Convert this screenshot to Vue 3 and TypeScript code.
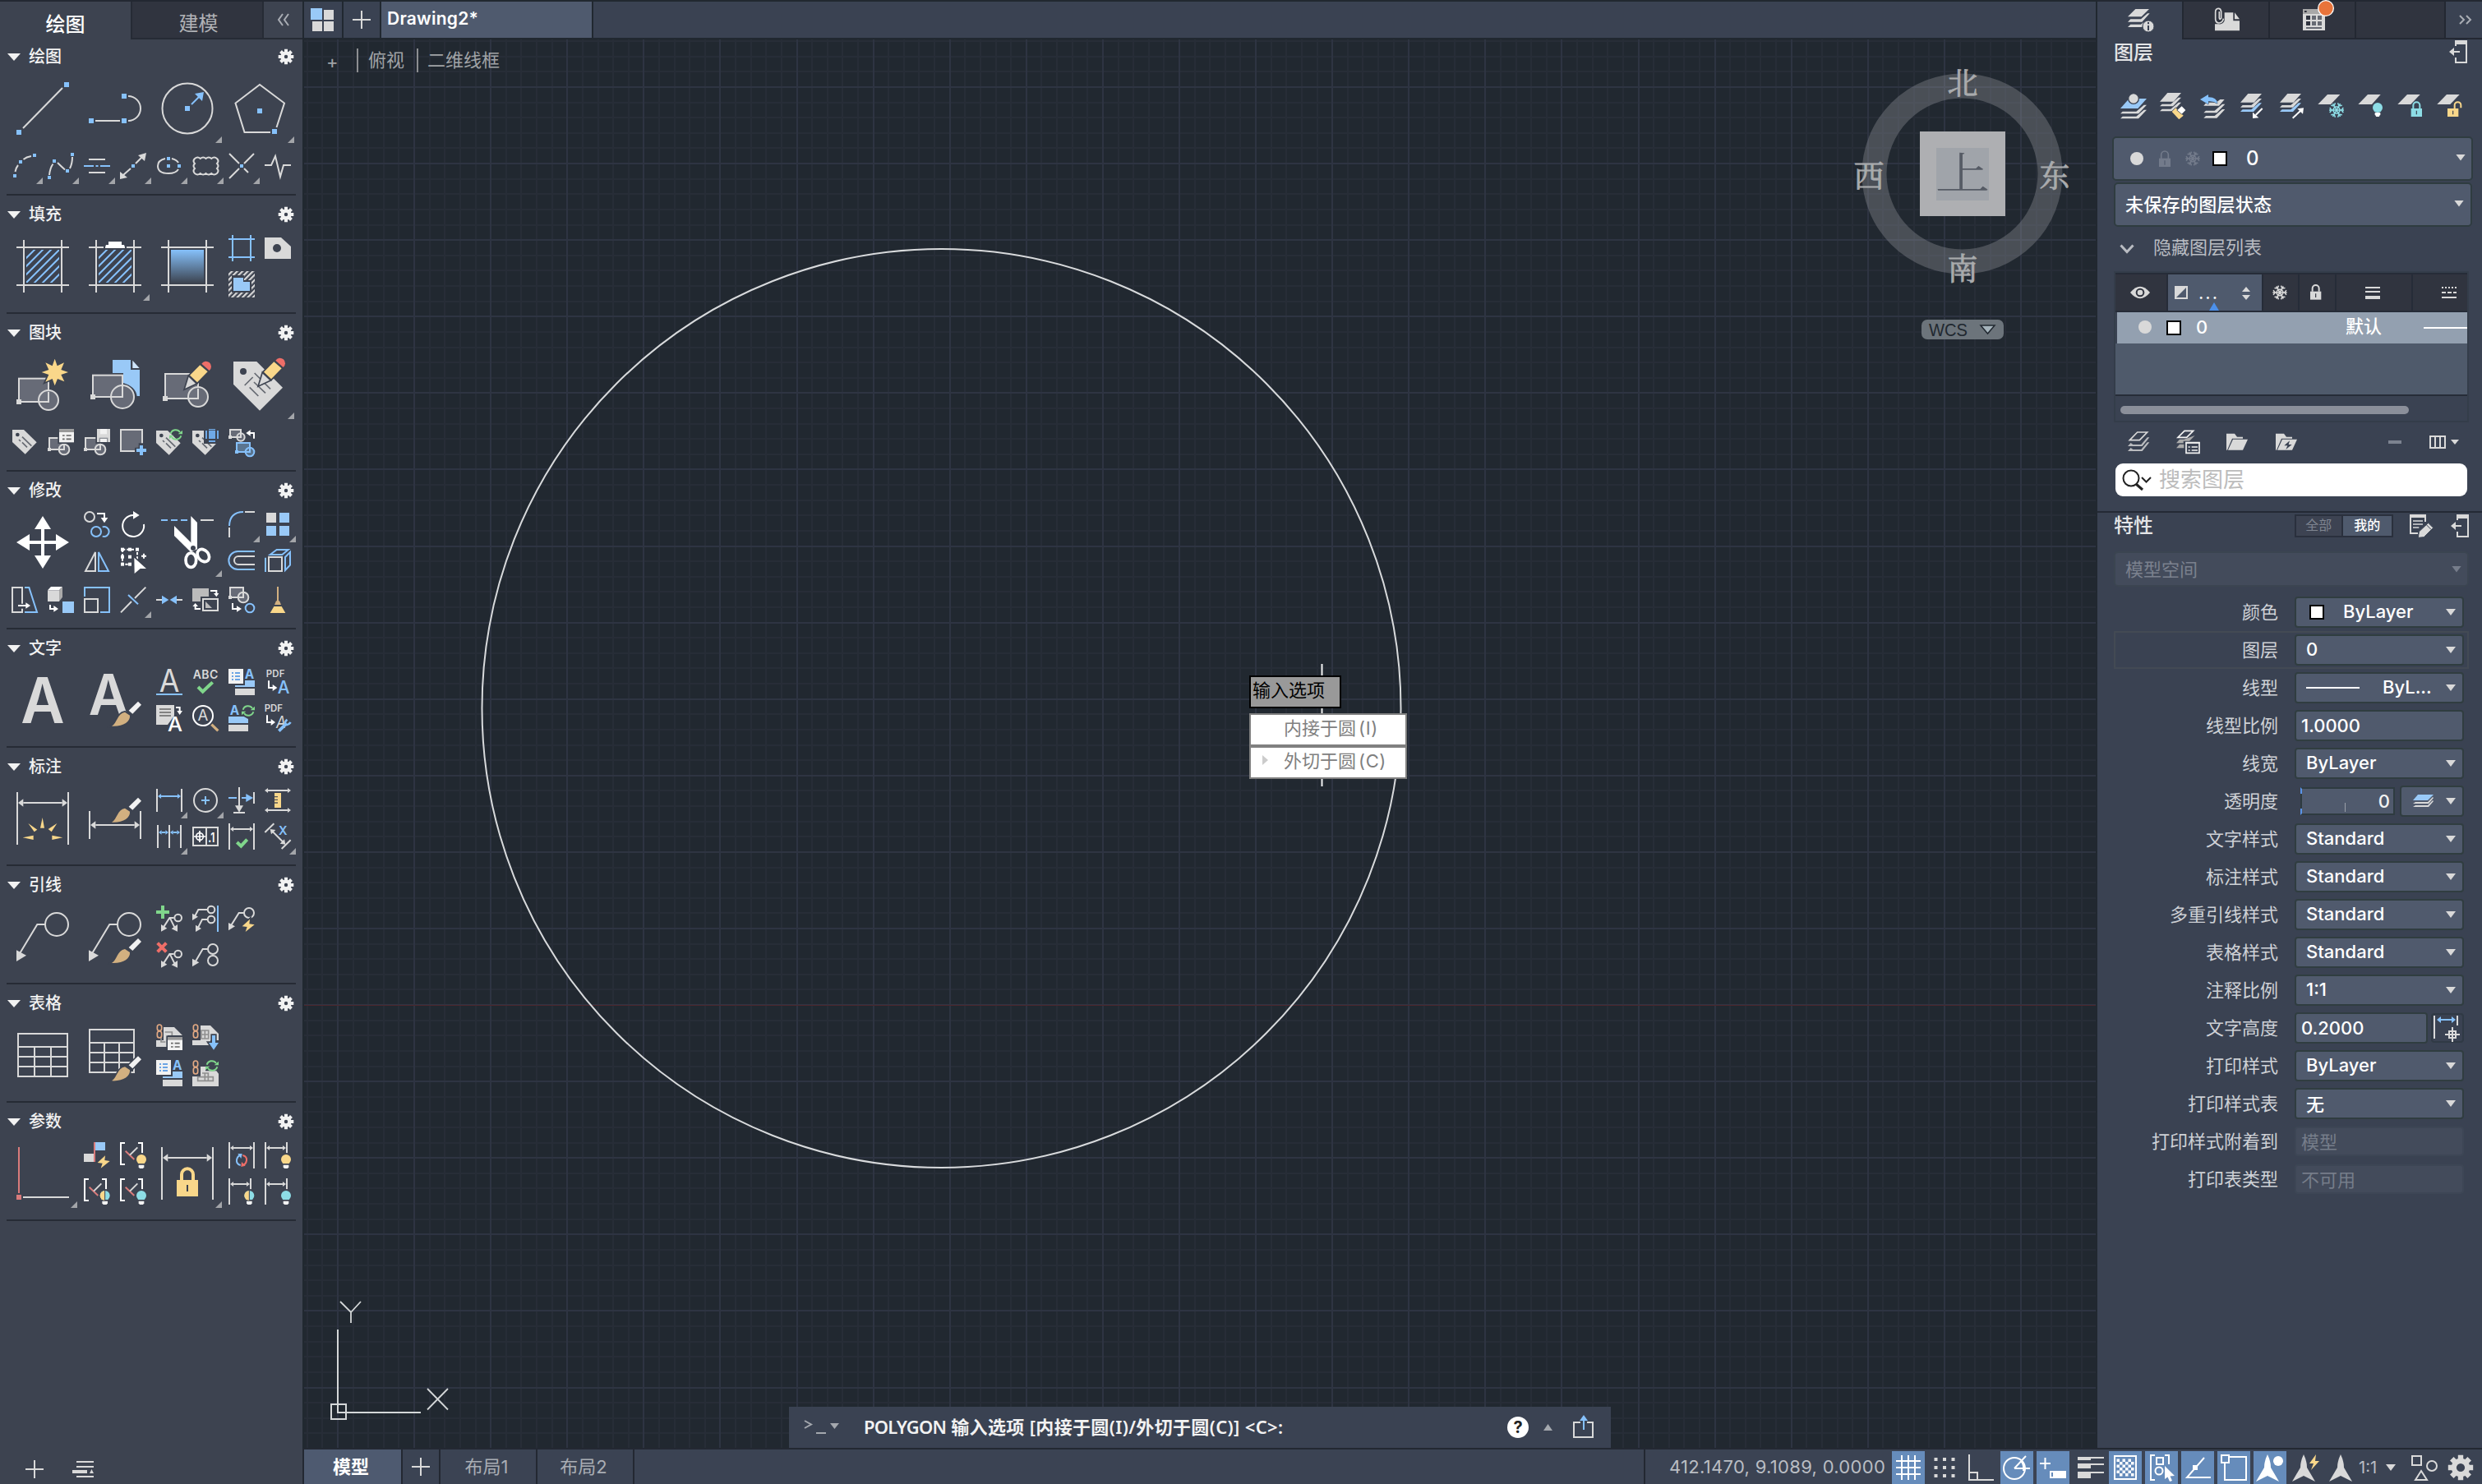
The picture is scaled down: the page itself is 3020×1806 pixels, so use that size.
<script setup lang="ts">
interface Glyph {
  c: number
  r: number
  big?: boolean
  fly?: boolean
  g: string
}
interface Section {
  title: string
  top: number
  baseY: number
  unit: number
  rows: number
  glyphs: Glyph[]
}

const PANEL = '#3d4350'

/* ---------- shared drawing helpers ---------- */
const sq = (x: number, y: number, s = 6, cls = 'fb2') =>
  `<rect class="${cls}" x="${x - s / 2}" y="${y - s / 2}" width="${s}" height="${s}"/>`

const dim = (x1: number, x2: number, y: number, s = 11, blue = false) => {
  const l = blue ? 'sb' : 'sg'
  const f = blue ? 'fb2' : 'fg'
  const k = s * 1.35
  return `<path class="${l}" d="M${x1 + k} ${y}H${x2 - k}"/><path class="${f}" d="M${x1} ${y}L${x1 + k} ${y - s}V${y + s}ZM${x2} ${y}L${x2 - k} ${y - s}V${y + s}Z"/>`
}

const brush = (x: number, y: number) =>
  `<g class="cut"><path class="fw" d="M${x + 60} ${y + 33}L${x + 94} ${y}L${x + 106} ${y + 12}L${x + 74} ${y + 45}Z"/>` +
  `<path class="ft" d="M${x - 2} ${y + 90}C${x + 18} ${y + 78} ${x + 18} ${y + 44} ${x + 46} ${y + 39}L${x + 64} ${y + 51}C${x + 66} ${y + 74} ${x + 40} ${y + 92} ${x - 2} ${y + 90}Z"/></g>`

const pencil = (x: number, y: number) =>
  `<g class="cut"><path class="fy" d="M${x + 17} ${y + 50}L${x + 54} ${y + 13}L${x + 82} ${y + 37}L${x + 44} ${y + 76}Z"/>` +
  `<path class="fg" d="M${x} ${y + 98}L${x + 13} ${y + 56}L${x + 38} ${y + 80}Z"/>` +
  `<path class="fr" d="M${x + 60} ${y + 8}A19 19 0 1 1 ${x + 88} ${y + 33}Z"/></g>`

const bulb = (x: number, y: number, col: string, half = false) =>
  `<g class="cut"><circle cx="${x}" cy="${y}" r="18" fill="${col}"/>` +
  `<path class="fw" d="M${x - 10} ${y + 20}H${x + 10}V${y + 28}L${x + 6} ${y + 33}H${x - 6}L${x - 10} ${y + 28}Z"/></g>` +
  (half ? `<path fill="#f9d78a" d="M${x} ${y - 18}A18 18 0 0 0 ${x} ${y + 18}Z"/><path stroke="${PANEL}" stroke-width="3" d="M${x} ${y - 18}V${y + 18}"/>` : '')

const blockShape = (x: number, y: number, w: number, h: number, r: number, cls = 'body', dot = 14) =>
  `<rect class="${cls}" x="${x}" y="${y}" width="${w}" height="${h}"/>` +
  `<circle class="${cls}" cx="${x + w}" cy="${y + h}" r="${r}"/>` +
  `<path class="${cls === 'body' ? 'sg' : 'sb'}" d="M${x + w} ${y + h - r}V${y + h}H${x + w - r}"/>` +
  sq(x, y + h, dot, cls === 'body' ? 'fg' : 'fb2')

const tag = (x: number, y: number) =>
  `<path class="fg" d="M${x} ${y}H${x + 42}L${x + 89} ${y + 46}L${x + 47} ${y + 89}L${x} ${y + 45}Z"/>` +
  `<circle cx="${x + 19}" cy="${y + 18}" r="7" fill="${PANEL}"/>` +
  `<path class="sd" d="M${x + 36} ${y + 26}l34 33M${x + 24} ${y + 36}l6 6M${x + 36} ${y + 46}l18 18"/>`

const sync = (x: number, y: number, r = 19) =>
  `<g class="cut"><path class="snn" d="M${x - r} ${y - 4}A${r} ${r} 0 0 1 ${x + r - 4} ${y - 9}M${x + r} ${y + 4}A${r} ${r} 0 0 1 ${x - r + 4} ${y + 9}"/></g>` +
  `<path class="fn" d="M${x + r + 5} ${y - 16}V${y - 2}H${x + r - 11}ZM${x - r - 5} ${y + 16}V${y + 2}H${x - r + 11}Z"/>`

const bolt = (x: number, y: number) =>
  `<path class="fy cut1" d="M${x + 28} ${y}L${x} ${y + 26}L${x + 18} ${y + 28}L${x + 12} ${y + 46}L${x + 45} ${y + 20}L${x + 26} ${y + 17}Z"/>`

const link = (x: number, y: number) =>
  `<rect class="so" x="${x + 4}" y="${y + 3}" width="16" height="22" rx="8"/><rect class="so" x="${x + 4}" y="${y + 27}" width="16" height="24" rx="8"/>`

const listA = (x: number, y: number, ax: number) =>
  `<text class="tx" x="${ax}" y="${y + 36}" font-size="46" font-weight="700" fill="#86c1fb">A</text>` +
  `<path fill="#99c9f7" d="M${x + 24} ${y + 60}H${x + 60}V${y + 42}H${x + 96}V${y + 66}H${x + 24}Z"/>` +
  `<path class="fg" d="M${x + 24} ${y + 72}H${x + 96}V${y + 96}H${x + 24}Z"/>` +
  `<path class="fw" d="M${x} ${y}H${x + 54}V${y + 54}H${x}Z"/>` +
  `<path stroke="#3f8ae0" stroke-width="5" d="M${x + 12} ${y + 15}h6m6 0h18M${x + 12} ${y + 27}h6m6 0h18M${x + 12} ${y + 39}h6m6 0h18"/>`

const card = (x: number, y: number) =>
  `<g class="cut"><rect class="fw" x="${x}" y="${y}" width="54" height="48"/></g><rect x="${x}" y="${y}" width="54" height="11" fill="#999"/>` +
  `<path stroke="#666" stroke-width="5" d="M${x + 12} ${y + 23}h8m6 0h18M${x + 12} ${y + 36}h8m6 0h18"/>`

const constraint = (x: number, y: number) =>
  `<path class="sw" d="M${x + 18} ${y + 3}H${x + 3}V${y + 81}H${x + 18}M${x + 66} ${y + 3}H${x + 81}V${y + 40}"/>` +
  `<path stroke="#d97b7b" stroke-width="6" d="M${x + 20} ${y + 32}l32 31"/><path class="sg" d="M${x + 36} ${y + 47}l28 -28"/>`

const leader = (x: number, y: number) =>
  `<path class="sg" d="M${x + 14} ${y + 148}L${x + 76} ${y + 45}H${x + 104}"/><circle class="sg" cx="${x + 147}" cy="${y + 45}" r="42"/>` +
  `<path class="fg" d="M${x} ${y + 180}V${y + 139}L${x + 36} ${y + 158}Z"/>`

const fanLeader = (x: number, y: number) =>
  `<path class="sg" d="M${x - 22} ${y + 34}L${x} ${y}H${x + 16}M${x + 2} ${y + 2}L${x + 18} ${y + 34}"/><circle class="sg" cx="${x + 31}" cy="${y}" r="13"/>` +
  `<path class="fg" d="M${x - 31} ${y + 50}V${y + 24}L${x - 9} ${y + 38}ZM${x + 29} ${y + 50}V${y + 24}L${x + 7} ${y + 40}Z"/>`

/* ---------- hatch frame used by the three fill tools ---------- */
const frame = (x: number) =>
  `<path class="sg" d="M${x + 9} 292V356M${x + 55} 292V356M${x} 301H${x + 64}M${x} 347H${x + 64}"/>`
const diag = (x: number) =>
  `<svg x="${x + 12}" y="304" width="40" height="40" viewBox="0 0 40 40"><path class="sb" d="M-2 12L12 -2M-2 22L22 -2M-2 32L32 -2M-2 42L42 -2M8 42L42 8M18 42L42 18M28 42L42 28"/></svg>`

/* ---------- scalloped outline of the revision cloud ---------- */
const cloud = () => {
  let d = 'M237 193'
  for (let i = 0; i < 4; i++) d += 'q3.500 -3 6.750 0'
  for (let i = 0; i < 3; i++) d += 'q3 3 0 6'
  for (let i = 0; i < 4; i++) d += 'q-3.500 3 -6.750 0'
  for (let i = 0; i < 3; i++) d += 'q-3 -3 0 -6'
  return d + 'Z'
}

const sections: Section[] = [
  {
    title: '绘图', top: 45, baseY: 0, unit: 1, rows: 3,
    glyphs: [
      { c: 0, r: 0, big: true, g: `<path class="sg" d="M28 156L76 107"/>${sq(23, 161)}${sq(81, 103)}` },
      { c: 2, r: 0, big: true, g: `<path class="sg" d="M116 147H146M156 117A15 15 0 0 1 156 147"/>${sq(111, 147)}${sq(151, 147)}${sq(151, 117)}` },
      { c: 4, r: 0, big: true, fly: true, g: `<circle class="sg" cx="228" cy="132" r="30.5"/>${sq(228, 132)}<path class="sb" d="M233 127L243 117"/><path class="fb2" d="M248 112L246 123L237 114Z"/>` },
      { c: 6, r: 0, big: true, fly: true, g: `<path class="sg" d="M329 161H297.5L286.5 125.5L316 103L346 125.5L336.500 155"/>${sq(316, 135)}${sq(334, 160)}` },
      { c: 0, r: 2, fly: true, g: `<path class="sg" d="M18.500 209Q19.500 204 22 201M28.500 194Q32 191 38 190"/>${sq(18, 214, 4)}${sq(25, 197, 4)}${sq(42, 189, 4)}` },
      { c: 1, r: 2, fly: true, g: `<path class="sg" d="M60 213Q61 204 64.500 199.500M70 198Q74 202 79 206.500M85 205Q88 199 88 191"/>${sq(60, 216, 4)}${sq(66, 196, 4)}${sq(82, 208, 4)}${sq(88, 188, 4)}` },
      { c: 2, r: 2, fly: true, g: `<path class="sg" d="M108 194H128M108 210H128"/><path class="sb" d="M102 202H114M116.500 202H119.500M122 202H134"/>` },
      { c: 3, r: 2, fly: true, g: `<path class="sg" d="M150 213L159 205M165 199L173 191"/><path class="fg" d="M146 218V209L155 216ZM178 186L176 196L168 189Z"/>${sq(162, 202, 4)}` },
      { c: 4, r: 2, fly: true, g: `<path class="sg" d="M201 193Q192 195 192 202Q192 211 205 211Q214 211 217 206M209 193Q215 194.500 217 198"/>${sq(205, 193, 4)}${sq(218, 202, 4)}${sq(205, 202, 4)}` },
      { c: 5, r: 2, fly: true, g: `<path class="sg" d="${cloud()}"/>` },
      { c: 6, r: 2, fly: true, g: `<path class="sg" d="M279 187L291 199M309 187L297 199M279 217L291 205M297 205L302 210"/>${sq(294, 202, 4)}` },
      { c: 7, r: 2, g: `<path class="sg" d="M322 201H330L335 190L341 215L345 201H354"/>` },
    ],
  },
  {
    title: '填充', top: 237, baseY: 0, unit: 1, rows: 2,
    glyphs: [
      { c: 0, r: 0, big: true, g: frame(20) + diag(20) },
      { c: 2, r: 0, big: true, fly: true, g: frame(108) + diag(108) + `<path fill="${PANEL}" d="M126 292H154V303H126Z"/><path fill="#fff" d="M132 294H148V298H151Q152 300 152 302H128Q128 300 129 298H132Z"/>` },
      { c: 4, r: 0, big: true, g: `<defs><linearGradient id="fillGrad" x1="0" y1="0" x2="0" y2="1"><stop offset="0" stop-color="#86c1fb"/><stop offset="1" stop-color="#3d4552"/></linearGradient></defs>${frame(196)}<rect x="208" y="304" width="40" height="40" fill="url(#fillGrad)"/>` },
      { c: 6, r: 0, g: `<path class="sb" d="M283 286V318M305 286V318M278 291H310M278 313H310"/>` },
      { c: 7, r: 0, g: `<path class="fg" d="M322 289H342L354 300V315H322Z"/><circle cx="337" cy="302" r="5" fill="${PANEL}"/>` },
      { c: 6, r: 1, g: `<defs><pattern id="edgeHatch" width="4.500" height="4.500" patternUnits="userSpaceOnUse" patternTransform="rotate(45)"><rect width="2.200" height="4.500" fill="#d9d9d9"/></pattern></defs><rect x="278" y="330" width="32" height="32" fill="url(#edgeHatch)"/><path fill="${PANEL}" d="M282 335H297V341H306V356H282Z"/><path fill="#99c9f7" d="M284 338H296V343H304V354H284Z"/>` },
    ],
  },
  {
    title: '图块', top: 381, baseY: 390, unit: 3, rows: 3,
    glyphs: [
      { c: 0, r: 0, big: true, g: blockShape(69, 212, 108, 85, 36, 'body', 18).replace('cy="297"', 'cy="291"') + `<path class="fy cut1" d="M200 140L209 166L234 154L223 180L249 189L223 198L235 223L210 213L200 238L191 213L166 224L178 198L152 189L178 180L166 154L191 166Z"/>` },
      { c: 2, r: 0, big: true, g: `<path fill="#99c9f7" d="M411 144H477V180H510V276H500Q494 240 450 228V192H411Z"/><path fill="#cfe5fa" d="M484 146L509 174H484Z"/><g>${blockShape(339, 200, 108, 79, 42, 'body', 18)}</g>` },
      { c: 4, r: 0, big: true, g: blockShape(603, 195, 120, 90, 36, 'body', 18).replace('cy="285"', 'cy="279"') + pencil(676, 150) },
      { c: 6, r: 0, big: true, fly: true, g: `<path class="fg" d="M852 150H937L1032 245L948 329L852 233Z"/><circle cx="888" cy="186" r="12" fill="${PANEL}"/><path class="sd" d="M893 237l30 -30M929 192l58 58M927 225l42 40M911 244l32 32"/>${pencil(946, 138)}` },
      { c: 0, r: 2, g: tag(45, 399) },
      { c: 1, r: 2, g: blockShape(180, 429, 54, 42, 19, 'body', 12) + card(216, 397) },
      { c: 2, r: 2, g: blockShape(312, 429, 54, 42, 19, 'body', 12) + `<g class="cut"><path class="fg" d="M354 396H402V444H354Z"/></g><path class="fw" d="M366 396H390V415H366Z"/><path fill="#8d9097" d="M362 428H394V444H362Z"/><path class="fw" d="M366 432H390V444H366Z"/>` },
      { c: 3, r: 2, g: `<rect class="body" x="441" y="399" width="78" height="78"/><path stroke="${PANEL}" stroke-width="20" d="M516 448V492M492 474H534"/><path stroke="#86c1fb" stroke-width="12" d="M516 456V492M498 474H534"/>` },
      { c: 4, r: 2, g: tag(570, 402) + sync(642, 417) },
      { c: 5, r: 2, g: tag(702, 402) + `<path fill="${PANEL}" d="M744 392H798V450H744Z"/><path fill="#6fa9e6" d="M762 402H786V432H762ZM762 396H786V400H762ZM762 438H786V444H762ZM750 402H756V432H750ZM792 402H798V432H792Z"/>` },
      { c: 6, r: 2, g: blockShape(840, 399, 39, 27, 14, 'body', 12) + `<path class="sw" d="M927 431V411H908"/><path fill="#fff" d="M898 411L914 400V422Z"/>` + blockShape(864, 447, 48, 33, 16, 'bodyb', 12) },
    ],
  },
  {
    title: '修改', top: 573, baseY: 390, unit: 3, rows: 3,
    glyphs: [
      { c: 0, r: 0, big: true, g: `<path stroke="#fff" stroke-width="12" d="M156 750V870M96 810H216"/><path fill="#fff" d="M156 714L186 762H126ZM156 906L186 858H126ZM60 810L108 780V840ZM252 810L204 780V840Z"/>` },
      { c: 2, r: 0, g: `<circle class="sg" cx="327" cy="717" r="18"/><path class="sw" d="M354 705H381V722"/><path fill="#fff" d="M368 720H394L381 739Z"/><circle class="sb" cx="351" cy="771" r="18"/><path class="sb" d="M374 754A18 18 0 1 1 374 788"/>` },
      { c: 3, r: 0, g: `<path class="sw" d="M525 744A39 39 0 1 1 486 711H492"/><path fill="#fff" d="M486 696L509 711L486 725Z"/>` },
      { c: 2, r: 1, g: `<path class="sg" d="M348 846V915H312Z"/><path class="sb" d="M360 846V915H396Z"/>` },
      { c: 3, r: 1, g: `<path class="sw" stroke-dasharray="10 6" d="M447 836H501V890M447 836V890H480"/>${[[447, 836], [474, 836], [501, 836], [447, 863], [447, 890], [474, 863], [474, 890]].map(p => sq(p[0], p[1], 12, 'fww')).join('')}<path fill="#fff" class="cut1" d="M490 866L534 906L512 906L491 924Z"/><path class="sw" d="M516 860H534M525 851V869"/>` },
      { c: 4, r: 0, big: true, fly: true, g: `<path class="sb" d="M588 729H612M624 729H648M660 729H684"/><path class="sg" d="M732 729H780"/><path fill="#fff" d="M697 714L720 738V835L697 845Z"/><path fill="#fff" d="M636 750L718 832L696 845L636 786Z"/><ellipse cx="697" cy="875" rx="19" ry="26" fill="none" stroke="#fff" stroke-width="11"/><ellipse cx="742" cy="858" rx="19" ry="25" transform="rotate(-40 742 858)" fill="none" stroke="#fff" stroke-width="11"/><circle cx="705" cy="831" r="9" fill="${PANEL}"/>` },
      { c: 6, r: 0, fly: true, g: `<path class="sb" d="M837 750Q838 700 888 699"/><path class="sg" d="M894 699H930M837 756V792"/>` },
      { c: 7, r: 0, fly: true, g: `<path class="fg" d="M972 702H1008V738H972Z"/><path fill="#99c9f7" d="M1020 702H1056V738H1020ZM972 750H1008V786H972ZM1020 750H1056V786H1020Z"/>` },
      { c: 6, r: 1, g: `<path class="sb" d="M930 843H868A33 33 0 0 0 868 909H930"/><path class="sg" d="M930 861H870A15 15 0 0 0 870 891H930"/>` },
      { c: 7, r: 1, g: `<rect class="sg" x="981" y="864" width="48" height="51"/><path class="sb" d="M969 866V918M986 855L1010 837H1052L1030 855ZM1041 864L1059 846V893L1041 912Z"/>` },
      { c: 0, r: 2, g: `<path class="sg" d="M81 1034V975H45V1065H81V1052"/><path class="sb" d="M90 975H106L135 1065H90"/><path class="sw" d="M66 1041H98"/><path fill="#fff" d="M94 1030L111 1041L94 1052Z"/>` },
      { c: 1, r: 2, g: `<path fill="#fff" d="M174 985L186 972H228L216 985Z"/><path fill="#d9d9d9" d="M174 985H216V1026H174Z"/><path fill="#aaa" d="M216 985L228 972V1010L216 1026Z"/><path fill="#99c9f7" d="M228 1026H270V1068H228Z"/><path class="sw" d="M183 1038V1053H198"/><path fill="#fff" d="M196 1041L213 1053L196 1064Z"/>` },
      { c: 2, r: 2, g: `<path class="sb" d="M309 1008V975H399V1065H366"/><rect class="sg" x="309" y="1017" width="48" height="48"/>` },
      { c: 3, r: 2, fly: true, g: `<path class="sg" d="M441 1066L480 1026M492 1014L532 974"/><path class="sb" d="M468 1002L504 1036"/>` },
      { c: 4, r: 2, g: `<path class="sg" d="M570 1020H594M642 1020H666"/><path class="fb2" d="M591 1004L616 1020L591 1036ZM645 1004L620 1020L645 1036Z"/>` },
      { c: 5, r: 2, g: `<path fill="#bbb" d="M702 978H762V1008H732V1026H702Z"/><rect class="sg" x="741" y="1017" width="54" height="42"/><path fill="#bbb" d="M750 1026L774 1050H750Z"/><path class="sw" d="M768 987H790V998M732 1053H713V1042"/><path fill="#fff" d="M780 996H799L790 1009ZM703 1044H723L713 1032Z"/>` },
      { c: 6, r: 2, g: blockShape(840, 975, 48, 36, 19, 'body', 12) + `<path class="sw" d="M849 1032V1053H868"/><path fill="#fff" d="M864 1042L882 1053L864 1064Z"/><circle class="sb" cx="912" cy="1050" r="16"/>` },
      { c: 7, r: 2, g: `<path stroke="#d2b080" stroke-width="6" d="M1014 972V1030"/><path class="ft" d="M1008 1024H1020L1026 1038H1002Z"/><path class="fy" d="M1000 1044H1028L1042 1068H986Z"/>` },
    ],
  },
  {
    title: '文字', top: 765, baseY: 765, unit: 3, rows: 2,
    glyphs: [
      { c: 0, r: 0, big: true, g: `<text class="tx" x="156" y="345" font-size="230" font-weight="600" text-anchor="middle" textLength="160" lengthAdjust="spacingAndGlyphs" fill="#d9d9d9">A</text>` },
      { c: 2, r: 0, big: true, g: `<text class="tx" x="396" y="315" font-size="206" font-weight="600" text-anchor="middle" textLength="146" lengthAdjust="spacingAndGlyphs" fill="#d9d9d9">A</text>${brush(410, 266)}` },
      { c: 4, r: 0, g: `<text class="tx" x="618" y="231" font-size="114" text-anchor="middle" textLength="74" lengthAdjust="spacingAndGlyphs" fill="#d9d9d9">A</text><path class="sb" d="M570 240H666"/>` },
      { c: 5, r: 0, g: `<text class="tx" x="750" y="183" font-size="42" font-weight="600" text-anchor="middle" textLength="92" fill="#d9d9d9">ABC</text><path stroke="#80d68b" stroke-width="12" fill="none" d="M723 213L740 230L776 196"/>` },
      { c: 6, r: 0, g: listA(834, 147, 893) },
      { c: 7, r: 0, g: `<text class="tx" x="971" y="177" font-size="34" font-weight="600" textLength="68" fill="#d9d9d9">PDF</text><path class="sw" d="M981 190V216H998"/><path fill="#fff" d="M995 204L1012 216L995 228Z"/><text class="tx" x="1035" y="237" font-size="64" font-weight="500" text-anchor="middle" textLength="44" lengthAdjust="spacingAndGlyphs" fill="#86c1fb">A</text>` },
      { c: 4, r: 1, g: `<path class="fg" d="M570 279H636V318L612 351H570Z"/><path stroke="#666" stroke-width="5" d="M582 294H624M582 306H624M582 318H624"/><path class="sw" d="M642 288H656V302"/><path fill="#fff" d="M646 300H666L656 315Z"/><text class="tx" x="639" y="375" font-size="74" font-weight="500" text-anchor="middle" textLength="54" lengthAdjust="spacingAndGlyphs" fill="#fff">A</text>` },
      { c: 5, r: 1, g: `<circle class="sw" cx="741" cy="318" r="36"/><text class="tx" x="741" y="336" font-size="56" text-anchor="middle" fill="#d9d9d9">A</text><path stroke="#d2b080" stroke-width="10" d="M772 350L796 373"/>` },
      { c: 6, r: 1, g: `<text class="tx" x="839" y="315" font-size="46" font-weight="700" fill="#86c1fb">A</text><path fill="#99c9f7" d="M834 321H890L906 330V345H834Z"/><path class="fg" d="M834 351H906V375H834Z"/>${sync(906, 300)}` },
      { c: 7, r: 1, g: `<text class="tx" x="965" y="303" font-size="34" font-weight="600" textLength="67" fill="#d9d9d9">PDF</text><path class="sw" d="M975 316V342H992"/><path fill="#fff" d="M989 330L1005 342L989 354Z"/><text class="tx" x="1026" y="363" font-size="62" font-style="italic" text-anchor="middle" textLength="36" lengthAdjust="spacingAndGlyphs" fill="#d9d9d9">A</text><path stroke="#86c1fb" stroke-width="11" d="M1018 374L1046 346"/><path stroke="#86c1fb" stroke-width="8" fill="none" d="M1048 332Q1036 344 1044 350Q1052 354 1061 342"/>` },
    ],
  },
  {
    title: '标注', top: 909, baseY: 765, unit: 3, rows: 2,
    glyphs: [
      { c: 0, r: 0, big: true, g: `<path class="sg" d="M63 597V789M249 597V789"/>${dim(66, 246, 636, 14)}<path class="fy" d="M155 690L162 728H147ZM103 711L136 734L125 742ZM208 711L176 732L188 742ZM83 763L122 755V771ZM229 763L190 755V771Z"/>` },
      { c: 2, r: 0, big: true, g: `<path class="sg" d="M327 666V768M513 666V768"/>${dim(330, 510, 717, 14)}${brush(410, 617)}` },
      { c: 4, r: 0, fly: true, g: `<path class="sg" d="M573 585V669M663 585V669"/>${dim(576, 660, 612, 9, true)}` },
      { c: 5, r: 0, fly: true, g: `<circle class="sg" cx="750" cy="627" r="42"/><path class="sb" d="M735 627H765M750 612V642"/>` },
      { c: 6, r: 0, g: `<path class="sb" d="M834 618H864M882 618H900"/><path class="fb2" d="M898 603L924 618L898 633Z"/><path class="sg" d="M927 597V639M873 579V650M852 672H894"/><path class="fg" d="M858 646H888L873 671Z"/>` },
      { c: 7, r: 0, g: `${dim(966, 1062, 591, 9)}${dim(966, 1062, 663, 9)}<path class="fy" d="M1002 600H1026V654H1002Z"/><path stroke="#555" stroke-width="4" d="M1002 614H1014M1002 625H1014M1002 636H1014"/>` },
      { c: 4, r: 1, fly: true, g: `<path class="sg" d="M576 717V801M618 717V801M660 717V801"/>${dim(579, 615, 744, 8, true)}${dim(621, 657, 744, 8, true)}` },
      { c: 5, r: 1, g: `<rect class="sg" x="705" y="726" width="90" height="66"/><path class="sg" d="M753 726V792"/><circle cx="729" cy="759" r="13" fill="none" stroke="#fff" stroke-width="5"/><path stroke="#fff" stroke-width="5" d="M708 759H750M729 738V780"/><text class="tx" x="772" y="780" font-size="48" font-weight="600" text-anchor="middle" textLength="24" lengthAdjust="spacingAndGlyphs" fill="#fff">.1</text>` },
      { c: 6, r: 1, g: `<path class="sg" d="M837 711V807M927 711V807"/>${dim(840, 924, 732, 9)}<path stroke="#80d68b" stroke-width="12" fill="none" d="M865 780L880 794L902 770"/>` },
      { c: 7, r: 1, fly: true, g: `<path class="sg" d="M967 744L1000 712M1028 804L1061 772M994 740L1034 780"/><path class="fg" d="M986 732L1006 735L990 751ZM1042 788L1022 785L1038 769Z"/><text class="tx" x="1033" y="752" font-size="44" font-weight="600" text-anchor="middle" fill="#86c1fb">X</text>` },
    ],
  },
  {
    title: '引线', top: 1053, baseY: 765, unit: 3, rows: 2,
    glyphs: [
      { c: 0, r: 0, big: true, g: leader(60, 1035) },
      { c: 2, r: 0, big: true, g: leader(324, 1035) + brush(410, 1131) },
      { c: 4, r: 0, g: `<path stroke="#80d68b" stroke-width="12" d="M594 1011V1059M570 1035H618"/>${fanLeader(619, 1056)}` },
      { c: 5, r: 0, g: `<path class="sg" d="M710 1052L724 1026H756M722 1094L738 1062H756"/><circle class="sg" cx="771" cy="1026" r="13"/><circle class="sg" cx="771" cy="1062" r="13"/><path class="fg" d="M702 1065V1040L723 1052ZM714 1107V1082L735 1095Z"/><path class="sb" d="M795 1011V1107"/>` },
      { c: 6, r: 0, g: `<path class="sg" d="M842 1086L872 1038H890"/><circle class="sg" cx="909" cy="1038" r="18"/><path class="fg" d="M834 1102V1074L858 1087Z"/>${bolt(884, 1061)}` },
      { c: 4, r: 1, g: `<path stroke="#ee6e68" stroke-width="12" d="M575 1148L607 1180M607 1148L575 1180"/>${fanLeader(619, 1188)}` },
      { c: 5, r: 1, g: `<path class="sg" d="M712 1218L740 1170H758"/><circle class="sg" cx="777" cy="1170" r="18"/><circle class="sg" cx="777" cy="1212" r="18"/><path class="fg" d="M702 1234V1205L727 1219Z"/>` },
    ],
  },
  {
    title: '表格', top: 1197, baseY: 1200, unit: 3, rows: 2,
    glyphs: [
      { c: 0, r: 0, big: true, g: `<path class="sg" d="M66 174H246V330H66ZM66 222H246M66 258H246M66 294H246M126 222V330M186 222V330"/>` },
      { c: 2, r: 0, big: true, g: `<path class="sg" d="M327 159H489V315H327ZM327 207H489M327 243H489M327 279H489M381 207V315M435 207V315"/>${brush(410, 256)}` },
      { c: 4, r: 0, g: `<path class="fg" d="M597 150H636L666 180H612V222H570V198H597Z"/><path stroke="#8f8f8f" stroke-width="5" fill="none" d="M602 168H628V180M588 186V204H604"/>${link(570, 138)}${card(612, 186)}` },
      { c: 5, r: 0, g: `<path class="fg" d="M732 144H768L798 174V198H768V216H702V198H732Z"/><path stroke="#8f8f8f" stroke-width="5" fill="none" d="M734 162H762M734 177H762M734 192H762M735 160V194M748 160V194M761 160V194"/>${link(702, 138)}<g class="cut"><path class="fb2" d="M774 180H786V207H798L780 233L762 207H774Z"/></g>` },
      { c: 4, r: 1, g: listA(570, 270, 630) },
      { c: 5, r: 1, g: `<path class="fg" d="M732 294H750V310H790L798 320V366H702V330H732Z"/><path stroke="#8f8f8f" stroke-width="5" fill="none" d="M722 332H778V346H722ZM738 318H760V346M748 318V346"/>${link(702, 270)}${sync(774, 291)}` },
    ],
  },
  {
    title: '参数', top: 1341, baseY: 1200, unit: 3, rows: 2,
    glyphs: [
      { c: 0, r: 0, big: true, fly: true, g: `<path stroke="#d97b7b" stroke-width="6" d="M69 588V756"/>${sq(69, 771, 18, 'fp')}<path class="sg" d="M84 771H252"/>` },
      { c: 2, r: 0, g: `<path fill="#99c9f7" d="M348 570H384V600H348Z"/><path class="fg" d="M306 612H342V642H306Z"/><path stroke="#d97b7b" stroke-width="6" d="M345 570V642"/>${bolt(356, 619)}` },
      { c: 3, r: 0, g: constraint(438, 570) + bulb(516, 633, '#f9d78a') },
      { c: 2, r: 1, g: constraint(306, 702) + bulb(383, 765, '#8ddde6', true) },
      { c: 3, r: 1, g: constraint(438, 702) + bulb(516, 765, '#8ddde6') },
      { c: 4, r: 0, big: true, fly: true, g: `<path class="sg" d="M591 588V780M777 588V780"/>${dim(594, 774, 627, 14)}<path class="fy" d="M645 708H723V768H645Z"/><path fill="none" stroke="#f9d78a" stroke-width="12" d="M663 708V688A21 21 0 0 1 705 688V708"/><path stroke="${PANEL}" stroke-width="6" d="M684 726V750"/>` },
      { c: 6, r: 0, g: `<path class="sg" d="M837 570V666M927 570V666"/>${dim(840, 924, 591, 9)}<path class="sb" d="M878 654Q862 650 864 635Q866 622 876 618"/><path class="fb2" d="M868 612L884 612L880 630Z"/><path stroke="#ee6e68" stroke-width="6" fill="none" d="M886 618Q902 622 900 637Q898 650 888 654"/><path class="fr" d="M882 642L880 660L896 656Z"/>` },
      { c: 7, r: 0, g: `<path class="sg" d="M969 570V666M1047 570V610"/>${dim(972, 1044, 591, 9)}${bulb(1044, 633, '#f9d78a')}` },
      { c: 6, r: 1, g: `<path class="sg" d="M837 702V798M915 702V742"/>${dim(840, 912, 723, 9)}${bulb(910, 765, '#8ddde6', true)}` },
      { c: 7, r: 1, g: `<path class="sg" d="M969 702V798M1047 702V742"/>${dim(972, 1044, 723, 9)}${bulb(1044, 765, '#8ddde6')}` },
    ],
  },
]

const viewBox = (s: Section, g: Glyph) => {
  const u = s.unit
  const x = (g.big ? 20 : 14) + 44 * g.c
  const y = s.top + (g.big ? 55 : g.r === 2 ? 141 : 49 + 44 * g.r)
  const side = (g.big ? 64 : 32) * u
  return `${x * u} ${(y - s.baseY) * u} ${side} ${side}`
}
const area = (g: Glyph) => {
  const n = g.big ? 2 : 1
  return { gridArea: `${g.r + 1} / ${g.c + 1} / span ${n} / span ${n}` }
}

/* ---------- layer toolbar ---------- */
const sheet = (x: number, y: number, w = 78, cls = 'fg') =>
  `<path class="${cls}" d="M${x} ${y + 32}L${x + 28} ${y}H${x + w}L${x + w - 28} ${y + 32}Z"/>`
const under = (x: number, y: number, w = 78, cls = 'fg') =>
  `<path class="${cls}" d="M${x} ${y + 22}H${x + w - 30}L${x + w} ${y - 10}L${x + w - 10} ${y - 10}L${x + w - 38} ${y + 14}H${x + 8}Z"/>`
const flake = (x: number, y: number, r: number, col: string) => {
  const at = (rad: number, deg: number) => {
    const a = (deg * Math.PI) / 180
    return `${(x + rad * Math.cos(a)).toFixed(1)} ${(y + rad * Math.sin(a)).toFixed(1)}`
  }
  let d = ''
  let hex = ''
  for (let i = 0; i < 6; i++) {
    const a = i * 60
    d += `M${x} ${y}L${at(r, a)}`
    d += `M${at(r * 0.98, a - 20)}L${at(r * 0.66, a)}L${at(r * 0.98, a + 20)}`
    hex += (i ? 'L' : 'M') + at(r * 0.5, a)
  }
  return `<path fill="none" stroke="${col}" stroke-width="4.500" d="${d}${hex}Z"/>`
}
const padlock = (x: number, y: number, col: string, open = false, hole = '#3a4252') =>
  `<path fill="${col}" d="M${x} ${y + 24}H${x + 40}V${y + 54}H${x}Z"/><path fill="none" stroke="${col}" stroke-width="6" d="${open ? `M${x + 26} ${y + 24}V${y + 12}A11 11 0 0 1 ${x + 49} ${y + 12}V${y + 22}` : `M${x + 8} ${y + 24}V${y + 13}A12 12 0 0 1 ${x + 32} ${y + 13}V${y + 24}`}"/><path stroke="${hole}" stroke-width="3.500" d="M${x + 20} ${y + 32}V${y + 46}"/>`

const layerTools = [
  `<path fill="#99c9f7" d="M120 396L152 360H216L184 396Z"/>${under(120, 393, 96)}${under(120, 411, 96)}<circle cx="168" cy="360" r="19" fill="#d9d9d9" stroke="#3a4252" stroke-width="4"/>`,
  `${sheet(264, 339)}${under(264, 366)}${under(264, 384)}<g stroke="#3a4252" stroke-width="4" paint-order="stroke"><path fill="#f9d78a" d="M308 408L322 394L350 422L334 436Z"/><path fill="#fff" d="M328 402L344 388L358 402L344 416Z"/></g>`,
  `<path fill="#d9d9d9" d="M424 386L434 374H470L484 363H500L480 386Z"/>${under(424, 390)}${under(424, 409)}<path fill="#86c1fb" stroke="#3a4252" stroke-width="3" paint-order="stroke" d="M411 363L441 345V355Q472 354 474 378Q460 368 441 370V381Z"/>`,
  `${sheet(558, 342)}${under(558, 370)}${under(558, 386, 78, 'fb1')}<path stroke="#3a4252" stroke-width="14" d="M640 394L604 432"/><path stroke="#fff" stroke-width="6" d="M638 396L614 420"/><path fill="#fff" d="M603 432V410L625 430Z"/>`,
  `${sheet(702, 342)}${under(702, 370)}${under(702, 386, 78, 'fb1')}<path stroke="#3a4252" stroke-width="14" d="M748 432L788 396"/><path stroke="#fff" stroke-width="6" d="M749 431L778 404"/><path fill="#fff" d="M789 394L786 416L766 397Z"/>`,
  `<path class="fg" d="M841 381L876 345H922L888 381Z"/>${flake(909, 402, 27, '#8ddde6')}`,
  `<path class="fg" d="M988 381L1023 345H1070L1038 381Z"/><circle cx="1059" cy="393" r="18" fill="#8ddde6"/><path fill="#fff" d="M1049 411H1069V418L1064 426H1054L1049 418Z"/>`,
  `<path class="fg" d="M1132 381L1167 345H1214L1180 381Z"/>${padlock(1181, 372, '#8ddde6')}`,
  `<path class="fg" d="M1276 381L1311 345H1358L1324 381Z"/>${padlock(1314, 372, '#f9d78a', true)}`,
]

/* ---------- property rows ---------- */
interface Prop { label: string; value: string; kind: string }
const props: Prop[] = [
  { label: '颜色', value: 'ByLayer', kind: 'color' },
  { label: '图层', value: '0', kind: 'select' },
  { label: '线型', value: 'ByL...', kind: 'line' },
  { label: '线型比例', value: '1.0000', kind: 'input' },
  { label: '线宽', value: 'ByLayer', kind: 'select' },
  { label: '透明度', value: '0', kind: 'slider' },
  { label: '文字样式', value: 'Standard', kind: 'select' },
  { label: '标注样式', value: 'Standard', kind: 'select' },
  { label: '多重引线样式', value: 'Standard', kind: 'select' },
  { label: '表格样式', value: 'Standard', kind: 'select' },
  { label: '注释比例', value: '1:1', kind: 'select' },
  { label: '文字高度', value: '0.2000', kind: 'height' },
  { label: '打印样式', value: 'ByLayer', kind: 'select' },
  { label: '打印样式表', value: '无', kind: 'select' },
  { label: '打印样式附着到', value: '模型', kind: 'off' },
  { label: '打印表类型', value: '不可用', kind: 'off' },
]

/* ---------- status toggles, 40 x 40 each ---------- */
const star = (cx: number) => `<path fill="currentColor" stroke="none" d="M${cx} 4Q${cx + 4} 12 ${cx + 4} 20L${cx + 14} 37L${cx} 30L${cx - 14} 37L${cx - 4} 20Q${cx - 4} 12 ${cx} 4Z"/>`
let checker = ''
for (let r = 0; r < 6; r++) for (let c = 0; c < 6; c++) if ((r + c) % 2 === 0) checker += `M${9.5 + c * 3.5} ${9.5 + r * 3.5}h3.500v3.500h-3.500Z`
const toggles = [
  { on: true, g: '<path d="M12 5V35M20 5V35M28 5V35M5 12H35M5 20H35M5 28H35"/>' },
  { on: false, g: '<path stroke-width="4" stroke-dasharray="4 6.500" d="M7.500 10H33M7.500 20H33M7.500 30H33"/>' },
  { on: false, g: '<path d="M6 4V35H36M6 26H16V35"/>' },
  { on: true, g: '<circle cx="17" cy="21" r="13"/><path d="M17 21L31 6M17 21H36M25 12Q29 16 28 24"/>' },
  { on: true, g: '<path d="M4 15H17M10.500 8V22"/><path fill="currentColor" stroke="none" d="M16 24H36V33H16Z"/><path stroke="#668cbb" d="M19 26V31"/>' },
  { on: false, g: '<path fill="currentColor" stroke="none" d="M6 7H38V9H22V11H6ZM6 15H38V17H22V21H6ZM6 25H38V27H22V33H6Z"/>' },
  { on: true, g: `<rect x="7" y="6" width="26" height="28"/><path fill="currentColor" stroke="none" d="${checker}"/>` },
  { on: true, g: '<path d="M12 5H7V35H12M24 5H29V16"/><rect x="14" y="8" width="8" height="8"/><circle cx="17" cy="24" r="4.500"/><path fill="currentColor" stroke="none" d="M24 18L36 30L30.500 30.500L33 36L30 37L27.500 31.500L24 34Z"/>' },
  { on: true, g: '<path d="M28 8L7 32H36"/><rect fill="currentColor" x="15" y="18" width="4" height="4"/>' },
  { on: true, g: '<rect x="5" y="5" width="9" height="9"/><path d="M14 7H35V35H9V14"/>' },
  { on: true, g: star(17) + '<circle cx="30" cy="12" r="6" fill="currentColor" stroke="none"/>' },
  { on: false, g: star(17) + '<path fill="#f9d78a" stroke="none" d="M32 4L24 15H29L26 23L36 12H31Z"/>' },
]

/* ---------- drawing grid ---------- */
const STEP = 93.09
const vMajor: number[] = []
const hMajor: number[] = []
const vMinor: number[] = []
const hMinor: number[] = []
for (let i = -3; i < 120; i++) {
  const x = 411 - 370 + (i * STEP) / 5
  const y = 106 - 48 + (i * STEP) / 5
  if (x > 0 && x < 2180) (i % 5 === 0 ? vMajor : vMinor).push(Math.round(x))
  if (y > 0 && y < 1714) (i % 5 === 0 ? hMajor : hMinor).push(Math.round(y))
}
const vPath = (a: number[]) => a.map(v => `M${v} 0V1714`).join('')
const hPath = (a: number[]) => a.map(v => `M0 ${v}H2180`).join('')
</script>

<template>
  <div class="app">
    <aside class="left">
      <div class="ltabs">
        <div class="ltab on">绘图</div>
        <div class="ltab">建模</div>
        <div class="lfold"><svg width="16" height="16" viewBox="0 0 16 16"><path class="thin" d="M7 1L2 8L7 15M14 1L9 8L14 15" /></svg></div>
      </div>
      <section v-for="(s, si) in sections" :key="s.title" class="sec" :class="{ first: si === 0, long: s.rows === 3 }">
        <header>
          <i class="tri"></i><span>{{ s.title }}</span>
          <svg class="gear" width="20" height="20" viewBox="-10 -10 20 20"><path stroke="#f2f2f2" stroke-width="4" d="M0 -9.300V9.300M-9.300 0H9.300M-6.500 -6.500L6.500 6.500M-6.500 6.500L6.500 -6.500" /><circle r="6.600" fill="#f2f2f2" /><circle r="2.200" fill="#3d4350" /></svg>
        </header>
        <div class="grid" :class="{ tall: s.rows === 3 }">
          <div v-for="(g, i) in s.glyphs" :key="i" class="cell" :class="{ big: g.big }" :style="area(g)">
            <svg :viewBox="viewBox(s, g)" :stroke-width="2 * s.unit" v-html="g.g"></svg>
            <i v-if="g.fly" class="fly"></i>
          </div>
        </div>
      </section>
      <div class="lend"></div>
      <div class="lfoot">
        <svg width="24" height="24" viewBox="0 0 24 24"><path class="lt" d="M0 12H22M11 1V23" /></svg>
        <svg width="28" height="24" viewBox="0 0 28 24"><path class="lt" d="M6 3H27M6 9H27M6 21H27" /><path fill="#d9d9d9" d="M1 13H19V17H1ZM22 17L24.500 12L27 17Z" /></svg>
      </div>
    </aside>

    <main class="mid">
      <div class="dtabs">
        <div class="dt home"><svg width="30" height="30" viewBox="0 0 30 30"><path fill="#99c9f7" d="M1 1H15V15H1Z" /><path fill="#d9d9d9" d="M17 3H29V15H17ZM3 17H15V29H3ZM17 17H29V29H17Z" /></svg></div>
        <div class="dt plus"><svg width="24" height="24" viewBox="0 0 24 24"><path class="lt" d="M1 12H23M12 1V23" /></svg></div>
        <div class="dt doc">Drawing2*</div>
        <div class="dt rest"></div>
      </div>

      <div class="canvas">
        <svg class="draw" width="2180" height="1714" viewBox="0 0 2180 1714">
          <path stroke="#272d37" stroke-width="2" :d="vPath(vMinor) + hPath(hMinor)" />
          <path stroke="#2e3442" stroke-width="2" :d="vPath(vMajor) + hPath(hMajor)" />
          <path stroke="#4c272d" stroke-width="1" d="M0 1175.500H2180" />
          <circle cx="775.500" cy="814" r="559" fill="none" stroke="#d8dadc" stroke-width="2" />
          <path stroke="#f2f2f2" stroke-width="2" d="M1238.500 760V909" />
          <g fill="none" stroke="#d4d7d8" stroke-width="2">
            <path d="M41 1570V1671H142M33 1661H51V1679H33Z" />
            <path stroke-width="1.800" d="M44 1536L57 1549L69 1536M57 1549V1562M150 1642L175 1667.500M175 1642L150 1667.500" />
          </g>
          <circle cx="2017.500" cy="163.500" r="107" fill="none" stroke="#93969a" stroke-opacity=".36" stroke-width="30" />
          <g font-family="'Noto Serif CJK SC','Noto Sans CJK SC',serif" font-size="37" fill="#a9abad" stroke="#a9abad" stroke-width=".8" text-anchor="middle">
            <text x="2018" y="67">北</text><text x="1904" y="180">西</text><text x="2130" y="180">东</text><text x="2018" y="293">南</text>
          </g>
          <rect x="1966" y="112" width="104" height="103" fill="#aeafb2" />
          <rect x="1986" y="132" width="64" height="64" fill="#a0a4aa" />
          <text transform="translate(2018 182) scale(1.04 .84)" font-family="'Noto Serif CJK SC','Noto Sans CJK SC',serif" font-size="64" font-weight="300" fill="#565b65" text-anchor="middle">上</text>
          <rect x="1968" y="341" width="100" height="24" rx="7" fill="#6c747b" />
          <text x="1977" y="361" font-family="'Liberation Sans',sans-serif" font-size="22" textLength="47" lengthAdjust="spacingAndGlyphs" fill="#212830">WCS</text>
          <path fill="#a5b3bb" stroke="#212830" stroke-width="1.500" d="M2040 348H2057L2048.500 358Z" />
        </svg>
        <div class="vlabels"><em>+</em><i></i><span>俯视</span><i></i><span>二维线框</span></div>
        <div class="prompt">输入选项</div>
        <div class="opts">
          <div class="opt">内接于圆<b>(I)</b></div>
          <div class="opt two"><i></i>外切于圆<b>(C)</b></div>
        </div>
        <div class="cmd">
          <svg width="46" height="26" viewBox="0 0 46 26"><path fill="none" stroke="#a4a8ae" stroke-width="2" d="M1 5L9 9.500L1 14M15 20H27" /><path fill="#a4a8ae" d="M32 8H43L37.500 15Z" /></svg>
          <span><b>POLYGON</b> 输入选项 [内接于圆(I)/外切于圆(C)] &lt;C&gt;:</span>
          <div class="help">?</div>
          <svg class="up" width="12" height="10" viewBox="0 0 12 10"><path fill="#a4a8ae" d="M0 9H11L5.500 1Z" /></svg>
          <svg width="26" height="30" viewBox="0 0 26 30"><path class="lt" d="M9 9H1V27H24V9H17" /><path stroke="#86c1fb" stroke-width="2" d="M13 5V18" /><path fill="#86c1fb" d="M13 0L18 7H8Z" /></svg>
        </div>
      </div>
    </main>

    <aside class="right">
      <div class="rtabs">
        <div class="rt on"><svg width="36" height="32" viewBox="144 30 108 96"><g transform="translate(-117 -306)">
          <path fill="#d9d9d9" d="M264 370L292 342H342L314 370ZM264 389L274 379H312L336 358H344L316 389ZM264 408L274 398H312L322 390L316 408Z" /></g><circle cx="222" cy="99" r="21" fill="#d9d9d9" stroke="#3a4252" stroke-width="3" /><path stroke="#3a4252" stroke-width="6" d="M222 84V91M222 96V114" /></svg></div>
        <div class="rt clip"><svg width="36" height="32" viewBox="456 20 108 96"><path fill="#d9d9d9" d="M465 84V108H555V72H532V42H500V72Q494 86 480 84Z" /><path fill="#d9d9d9" d="M537 42L555 66H537Z" /><path fill="none" stroke="#d9d9d9" stroke-width="5" d="M481 38V62Q482 70 488 62V38Q486 26 477 27Q467 28 467 40V66Q468 79 480 80Q494 79 496 64" /></svg></div>
        <div class="rt cal"><svg width="44" height="44" viewBox="756 6 132 132"><path fill="#a8a8a8" d="M783 33H864V54H783Z" /><path fill="#d9d9d9" d="M783 51H864V111H783Z" /><path fill="#30343f" d="M789 39H797V45H789ZM795 57H810V72H795ZM795 78H810V93H795Z" /><path fill="#666a73" d="M816 57H831V72H816ZM837 57H852V72H837ZM816 78H831V93H816ZM837 78H852V93H837ZM795 99H852V105H795Z" /><circle cx="867" cy="30" r="28" fill="#e8743b" stroke="#fff" stroke-width="4" /></svg></div>
        <div class="rt wide"></div>
        <div class="rt fold"><svg width="16" height="12" viewBox="0 0 16 12"><path class="thin" d="M1 1L6 6L1 11M9 1L14 6L9 11" /></svg></div>
      </div>

      <div class="rhead">
        <h3>图层</h3>
        <svg width="24" height="30" viewBox="0 0 24 30"><path fill="none" stroke="#d9d9d9" stroke-width="2" d="M9 8V2H22V28H9V22M6 15H14" /><path fill="#d9d9d9" d="M9 1H23V6H9ZM1 15L7 10V20Z" /></svg>
      </div>
      <div class="ltools">
        <svg v-for="(t, i) in layerTools" :key="i" width="48" height="38" :viewBox="`${96 + 144 * i} 330 144 114`" v-html="t"></svg>
      </div>

      <div class="combo layer">
        <svg width="130" height="24" viewBox="150 543 390 72"><circle cx="180" cy="579" r="24" fill="#d9d9d9" /><path fill="none" stroke="#737b8b" stroke-width="5" d="M269 580V565A12 12 0 0 1 295 565V580" /><path fill="#737b8b" d="M261 578H303V609H261Z" /><path stroke="#505a6d" stroke-width="3.500" d="M282 586V602" /><g v-html="flake(384, 579, 26, '#737b8b')"></g><rect x="459" y="555" width="48" height="48" fill="#fff" stroke="#000" stroke-width="6" /></svg>
        <span class="lzero">0</span><i class="dn"></i>
      </div>
      <div class="combo state"><span>未保存的图层状态</span><i class="dn"></i></div>
      <div class="hide"><svg width="18" height="12" viewBox="0 0 18 12"><path fill="none" stroke="#b9bcc2" stroke-width="3" d="M1.500 1.500L9 9.500L16.500 1.500" /></svg><span>隐藏图层列表</span></div>

      <div class="ltable">
        <div class="th">
          <div class="h1"><svg width="26" height="18" viewBox="153 83 78 50"><path fill="#d9d9d9" d="M156 108Q174 86 192 86Q210 86 228 108Q210 130 192 130Q174 130 156 108Z" /><circle cx="192" cy="108" r="13" fill="none" stroke="#30343f" stroke-width="6" /></svg></div>
          <div class="h2"><svg width="16" height="16" viewBox="0 0 16 16"><path fill="none" stroke="#d9d9d9" stroke-width="2" d="M1 1H15V15H1Z" /><path fill="#d9d9d9" d="M2 14V2H14Z" /></svg><span>...</span><svg class="sort" width="10" height="18" viewBox="0 0 10 18"><path fill="#d9d9d9" d="M5 1L10 7H0ZM5 17L10 11H0Z" /></svg><i></i></div>
          <div class="h3"><svg width="18" height="18" viewBox="-27 -27 54 54" v-html="flake(0, 0, 26, '#d9d9d9')"></svg></div>
          <div class="h4"><svg width="16" height="22" viewBox="-2 0 48 60" v-html="padlock(1, 2, '#d9d9d9', false, '#30343f')"></svg></div>
          <div class="h5"><svg width="18" height="16" viewBox="0 0 18 16"><path fill="#d9d9d9" d="M0 1H18V3H0ZM0 6H18V8H0ZM0 12H18V16H0Z" /></svg></div>
          <div class="h6"><svg width="18" height="16" viewBox="0 0 18 16"><path stroke="#d9d9d9" stroke-width="2" stroke-dasharray="2 2" d="M0 2H18" /><path stroke="#d9d9d9" stroke-width="2" d="M0 8H5M7 8H12M14 8H18M0 14H18" /></svg></div>
        </div>
        <div class="tr"><i class="dot"></i><i class="sw1"></i><span class="z">0</span><span class="d">默认</span><i class="ln"></i></div>
        <div class="tb"></div>
        <div class="sbar"><i></i></div>
      </div>

      <div class="lact">
        <svg width="28" height="30" viewBox="144 612 84 90"><path fill="none" stroke="#d9d9d9" stroke-width="5" d="M154 650L182 621H218L190 650Z" /><path fill="#d9d9d9" d="M147 672L158 660L166 666H196L218 640H226L200 672ZM147 690L158 678L166 684H196L218 658H226L200 690Z" opacity=".8" /></svg>
        <svg class="a2" width="32" height="32" viewBox="321 608 96 96"><path fill="none" stroke="#f2f2f2" stroke-width="5" d="M330 639L354 615H386L362 639Z" /><path fill="#aaa" d="M324 660L336 646H352L392 632L372 652H350V660ZM324 678L336 664H352V678Z" /><path fill="none" stroke="#f2f2f2" stroke-width="5" d="M360 658H408V696H360Z" /><path stroke="#f2f2f2" stroke-width="5" d="M358 659H410M368 674H374M380 674H402M368 686H374M380 686H402" /></svg>
        <svg class="a3" width="28" height="24" viewBox="504 620 84 70"><path fill="#d9d9d9" d="M507 684V624H537L546 636H567V642H528L510 684ZM513 684L531 645H585L567 684Z" /></svg>
        <svg class="a4" width="28" height="24" viewBox="684 620 84 70"><path fill="#d9d9d9" d="M687 684V624H717L726 636H747V642H708L690 684ZM693 684L711 645H765L747 684Z" /><path fill="#3a4252" d="M738 650L718 668H730L724 682L746 664H734Z" /></svg>
        <i class="minus"></i>
        <svg class="cols" width="38" height="18" viewBox="0 0 38 18"><path fill="none" stroke="#d9d9d9" stroke-width="2" d="M1 2H19V16H1ZM7 2V16M13 2V16" /><path fill="#d9d9d9" d="M26 6H36L31 12Z" /></svg>
      </div>
      <div class="search"><svg width="38" height="28" viewBox="0 0 38 28"><circle cx="11" cy="12" r="9.500" fill="none" stroke="#222" stroke-width="2" /><path fill="none" stroke="#222" stroke-width="3" d="M17 19L25 26" /><path fill="none" stroke="#222" stroke-width="2" d="M24 11L29.500 16.500L35 11" /></svg><span>搜索图层</span></div>

      <div class="phead">
        <h3>特性</h3>
        <div class="seg"><span>全部</span><span class="on">我的</span></div>
        <svg width="30" height="30" viewBox="1173 912 90 90"><path fill="none" stroke="#d9d9d9" stroke-width="6" d="M1206 984H1179V921H1233V942" /><path fill="#d9d9d9" d="M1176 915H1236V927H1176Z" /><path stroke="#d9d9d9" stroke-width="5" d="M1188 939H1224M1188 951H1224M1188 963H1210" /><path fill="#d9d9d9" stroke="#3a4252" stroke-width="3" d="M1207 1000L1210 978L1244 946L1262 964L1228 998Z" /><path stroke="#3a4252" stroke-width="3" d="M1236 952L1254 970" /></svg>
        <svg width="24" height="30" viewBox="0 0 24 30"><path fill="none" stroke="#d9d9d9" stroke-width="2" d="M9 8V2H22V28H9V22M6 15H14" /><path fill="#d9d9d9" d="M9 1H23V6H9ZM1 15L7 10V20Z" /></svg>
      </div>
      <div class="combo space"><span>模型空间</span><i class="dn"></i></div>

      <div class="plist">
        <div v-for="(p, i) in props" :key="i" class="prow" :class="{ hl: i === 1 }">
          <label>{{ p.label }}</label>
          <div v-if="p.kind === 'slider'" class="pair">
            <div class="slider"><i class="tk"></i><span>0</span></div>
            <div class="fld mini"><svg width="26" height="16" viewBox="0 0 26 16"><path fill="#99c9f7" d="M0 7L6 0H25L18 7Z" /><path fill="#d9d9d9" d="M0 11L3 9H18L24 3L25 4L19 11ZM0 15L3 13H18L24 7L25 8L19 15Z" /></svg><i class="dn"></i></div>
          </div>
          <div v-else-if="p.kind === 'height'" class="pair">
            <div class="fld inp ht">{{ p.value }}</div>
            <div class="pick"><svg width="34" height="34" viewBox="0 0 34 34"><path stroke="#d9d9d9" stroke-width="2" d="M2 1V29M30 1V13" /><path stroke="#86c1fb" stroke-width="2" d="M8 6H25" /><path fill="#86c1fb" d="M5 6L10 2V10ZM28 6L23 2V10Z" /><path fill="none" stroke="#d9d9d9" stroke-width="2" d="M15 24H33M24 15V33M20 20H28V28H20Z" /></svg></div>
          </div>
          <div v-else class="fld" :class="{ inp: p.kind === 'input' || p.kind === 'off', off: p.kind === 'off' }">
            <i v-if="p.kind === 'color'" class="swc"></i>
            <i v-if="p.kind === 'line'" class="lnt"></i>
            <span>{{ p.value }}</span>
            <i v-if="p.kind !== 'input' && p.kind !== 'off'" class="dn"></i>
          </div>
        </div>
      </div>
    </aside>

    <footer class="bottom">
      <div class="bt on">模型</div>
      <div class="bt add"><svg width="24" height="24" viewBox="0 0 24 24"><path class="lt" d="M1 12H23M12 1V23" /></svg></div>
      <div class="bt">布局1</div>
      <div class="bt">布局2</div>
      <div class="bt fill"></div>
      <div class="status">
        <span class="coord">412.1470, 9.1089, 0.0000</span>
        <div v-for="(t, i) in toggles" :key="i" class="tg" :class="{ on: t.on }"><svg width="40" height="40" viewBox="0 0 40 40" fill="none" stroke="currentColor" stroke-width="2" v-html="t.g"></svg></div>
        <svg class="lone" width="30" height="40" viewBox="2 0 30 40"><path fill="#d9d9d9" d="M17 4Q21 12 21 20L31 37L17 30L3 37L13 20Q13 12 17 4Z" /></svg>
        <span class="ratio">1:1</span>
        <svg class="rdn" width="12" height="10" viewBox="0 0 12 10"><path fill="#d9d9d9" d="M0 1H12L6 9Z" /></svg>
        <svg class="shapes" width="34" height="34" viewBox="0 0 34 34"><path fill="none" stroke="#d9d9d9" stroke-width="2" d="M2 3H13V14H2ZM13 21L20 32H6Z" /><circle cx="26" cy="15" r="6" fill="none" stroke="#d9d9d9" stroke-width="2" /></svg>
        <svg class="bgear" width="32" height="32" viewBox="-10 -10 20 20"><path stroke="#d9d9d9" stroke-width="4" d="M0 -9.500V9.500M-9.500 0H9.500M-6.700 -6.700L6.700 6.700M-6.700 6.700L6.700 -6.700" /><circle r="7" fill="#d9d9d9" /><circle r="3.200" fill="#3b4353" /></svg>
      </div>
    </footer>
  </div>
</template>

<style>
html, body { margin: 0; background: #212830; overflow: hidden; }
.app svg { display: block; flex: none; }
.sg, .sb, .sw { fill: none; }
.sg { stroke: #d9d9d9; }
.sb { stroke: #86c1fb; }
.sw { stroke: #fff; }
.so { fill: none; stroke: #e2a983; stroke-width: 5; }
.sd { fill: none; stroke: #666a72; stroke-width: 5; }
.snn { fill: none; stroke: #80d68b; stroke-width: 6; }
.fg { fill: #d9d9d9; }
.fw { fill: #f2f2f2; }
.fww { fill: #fff; }
.fb1 { fill: #99c9f7; }
.fb2 { fill: #86c1fb; }
.fy { fill: #f9d78a; }
.ft { fill: #d2b080; }
.fr { fill: #ee6e68; }
.fn { fill: #80d68b; }
.fp { fill: #d97b7b; }
.body { fill: #6e727e; fill-opacity: .85; stroke: #d9d9d9; }
.bodyb { fill: #5a7590; stroke: #86c1fb; }
.cut > .fw, .cut > .ft, .cut > .fy, .cut > .fg, .cut > .fr, .cut > .fb2, .cut > circle, .cut1 { stroke: #3d4350; stroke-width: 10; paint-order: stroke; }
.tx { font-family: Inter, 'Open Sans', sans-serif; }
.lt { fill: none; stroke: #d9d9d9; stroke-width: 2; }
.thin { fill: none; stroke: #a9adb4; stroke-width: 2; }
</style>

<style scoped>
.app {
  width: 3020px; height: 1806px; background: #212830; overflow: hidden;
  display: grid; grid-template-columns: 368px 2184px 468px; grid-template-rows: 1762px 44px;
  font-family: Inter, 'Noto Sans CJK SC', sans-serif; color: #f2f2f2;
}
i, em { font-style: normal; display: block; }
b { font-weight: 400; }

/* left palette */
.left { grid-row: 1 / 3; background: #3d4350; display: flex; flex-direction: column; border-top: 2px solid #232832; box-sizing: border-box; }
.ltabs { display: flex; height: 43px; flex: none; }
.ltab { width: 159px; font-size: 24px; display: flex; align-items: center; justify-content: center; padding: 5px 0 0 3px; box-sizing: border-box; background: #30343f; color: #b0b2b6; border-right: 2px solid #262b35; border-bottom: 2px solid #262b35; height: 46px; }
.ltab + .ltab { width: 162px; border-left: 2px solid #262b35; }
.ltab.on { background: #3d4350; color: #fff; border: 0; font-weight: 500; padding: 4px 0 0; }
.lfold { flex: 1; display: flex; align-items: center; justify-content: center; border-bottom: 2px solid #262b35; height: 44px; }
.sec { flex: none; height: 144px; display: flex; flex-direction: column; box-sizing: border-box; border-top: 2px solid #262b35; margin: -1px 8px 1px; }
.sec.long { height: 192px; }
.sec.first { border-top-color: transparent; }
.sec header { height: 42px; display: flex; align-items: center; flex: none; font-size: 20px; font-weight: 500; line-height: 38px; padding: 4px 0 0; box-sizing: border-box; }
.sec header span { padding-bottom: 1px; }
.tri { border: 8px solid transparent; border-top: 9px solid #f2f2f2; border-bottom: 0; margin: 1px 10px 0 1px; }
.gear { margin-left: auto; margin-right: 2px; }
.grid { display: grid; grid-template-columns: repeat(8, 44px); grid-template-rows: 44px 44px; }
.grid.tall { grid-template-rows: 44px 44px 48px; }
.cell { height: 44px; align-self: end; display: flex; align-items: center; justify-content: center; position: relative; }
.cell svg { width: 32px; height: 32px; overflow: visible; }
.cell.big { height: 88px; }
.cell.big svg { width: 64px; height: 64px; }
.fly { position: absolute; right: 0; bottom: 0; width: 8px; height: 8px; background: #a3a5a9; clip-path: polygon(100% 0, 100% 100%, 0 100%); }
.big .fly { right: 2px; bottom: 2px; }
.lend { border-top: 2px solid #262b35; margin: -1px 8px 0; }
.lfoot { margin-top: auto; display: flex; gap: 32px; padding: 0 0 6px 31px; align-items: center; }

/* middle */
.mid { display: flex; flex-direction: column; }
.dtabs { height: 46px; margin: 2px 2px 0 2px; display: flex; gap: 2px; flex: none; }
.dt { height: 44px; background: #3a4252; display: flex; align-items: center; justify-content: center; box-sizing: border-box; }
.home { width: 46px; padding: 0 2px 0 0; }
.plus { width: 44px; }
.doc { width: 256px; background: #4f5a6e; justify-content: flex-start; padding: 0 0 3px 7px; font-size: 21px; font-weight: 600; color: #fff; letter-spacing: .25px; }
.rest { flex: 1; }
.canvas { width: 2180px; height: 1714px; padding-left: 2px; position: relative; background: #212830; }
.draw { position: absolute; left: 2px; top: 0; }
.vlabels { position: absolute; left: 29px; top: 10px; display: flex; align-items: center; height: 30px; font-size: 22px; color: #a0a3a6; line-height: 30px; }
.vlabels em { width: 37px; font-size: 22px; padding-top: 3px; }
.vlabels i { width: 2px; height: 29px; background: #8c8e91; margin: 0 12px 0 0; }
.vlabels span + i { margin-left: 15px; margin-right: 11px; }
.prompt { position: absolute; left: 1152px; top: 774px; width: 112px; height: 40px; box-sizing: border-box; border: 2px solid #000; background: #999; color: #000; font-size: 22px; line-height: 33px; padding-left: 2px; white-space: nowrap; }
.opts { position: absolute; left: 1152px; top: 820px; width: 192px; height: 80px; box-sizing: border-box; border: 2px solid #808080; background: #808080; display: flex; flex-direction: column; gap: 4px; }
.opt { height: 36px; background: #fff; color: #808080; font-size: 22px; line-height: 32px; padding-left: 40px; display: flex; position: relative; white-space: nowrap; }
.opt b { margin-left: 3px; letter-spacing: .6px; }
.opt i { position: absolute; left: 14px; top: 9px; border: 6px solid transparent; border-left: 7px solid #ccc; border-right: 0; }
.cmd { position: absolute; left: 592px; top: 1664px; width: 1000px; height: 50px; background: #3a4252; display: flex; align-items: center; box-sizing: border-box; padding: 0 20px 0 18px; }
.cmd span { margin-left: 27px; font-family: 'Noto Sans', 'Noto Sans CJK SC', sans-serif; font-size: 22px; line-height: 30px; font-weight: 600; white-space: nowrap; letter-spacing: .35px; padding-bottom: 3px; }
.cmd b { font-weight: 600; letter-spacing: -.8px; }
.help { margin-left: auto; width: 26px; height: 26px; border-radius: 50%; background: #fff; color: #222; font-weight: 700; font-size: 20px; line-height: 26px; text-align: center; }
.up { margin: 0 24px 0 18px; }

/* right */
.right { background: #3a4252; display: flex; flex-direction: column; }
.rtabs { display: flex; height: 46px; border-top: 2px solid #232832; gap: 2px; background: #232832; }
.rt { width: 103px; height: 44px; background: #30343f; display: flex; align-items: center; justify-content: center; box-sizing: border-box; }
.rt.on { background: #3a4252; height: 46px; padding-left: 4px; }
.rt.clip { padding-left: 2px; }
.rt.cal svg { overflow: visible; margin-left: 2px; }
.rt.wide { width: 107px; }
.rt.fold { width: 44px; background: #3a4252; padding-left: 3px; }
h3 { margin: 0; font-size: 24px; font-weight: 500; color: #e4e5e7; }
.rhead { display: flex; height: 36px; justify-content: space-between; padding: 0 17px 0 20px; align-items: center; line-height: 32px; margin-top: -2px; }
.rhead svg { margin-top: -2px; }
.ltools { display: flex; padding-left: 20px; margin-top: 28px; }
.combo { display: flex; align-items: center; box-sizing: border-box; border: 2px solid #2f3c40; border-radius: 5px; background: #505a6d; height: 54px; font-size: 22px; font-weight: 500; color: #fff; }
.dn { margin-left: auto; width: 12px; height: 8px; background: #d9d9d9; clip-path: polygon(0 0, 100% 0, 50% 100%); flex: none; }
.layer { margin: 18px 11px 0 18px; padding: 0 7px 0 18px; }
.lzero { font-size: 24px; margin-left: 13px; padding-bottom: 1px; }
.state { margin: 2px 12px 0 20px; padding: 0 8px 0 12px; }
.state span { letter-spacing: .3px; padding-bottom: 4px; }
.state .dn, .layer .dn { margin-bottom: 3px; }
.hide { display: flex; align-items: center; height: 50px; padding-left: 27px; font-size: 22px; color: #b9bcc2; }
.hide span { margin-left: 23px; padding-bottom: 4px; }
.hide svg { margin-top: 4px; }
.ltable { margin: 4px 16px 0 20px; border: 2px solid #343d4a; height: 184px; box-sizing: border-box; display: flex; flex-direction: column; overflow: hidden; }
.th { height: 48px; background: #262c38; display: flex; gap: 2px; flex: none; box-sizing: border-box; padding: 2px 0; }
.th > div { background: #30343f; display: flex; align-items: center; justify-content: center; box-sizing: border-box; }
.h1 { width: 62px; padding-right: 2px; } .h2 { width: 114px; } .h3 { width: 42px; padding-right: 2px; } .h4 { width: 43px; padding-right: 3px; } .h5 { width: 91px; padding-right: 4px; } .h6 { width: 66px; padding-left: 22px; flex: 1; }
.th > .h2 { background: #4f5a6d; position: relative; justify-content: flex-start; padding-left: 8px; }
.h2 span { margin-left: 13px; font-size: 22px; letter-spacing: 2px; line-height: 30px; }
.h2 .sort { position: absolute; right: 14px; top: 14px; }
.h2 i { position: absolute; left: 50px; bottom: 0; border: 6px solid transparent; border-bottom: 10px solid #4c90ea; border-top: 0; }
.tr { height: 38px; background: #93a0b0; display: flex; align-items: center; flex: none; margin-left: 2px; font-size: 22px; line-height: 32px; font-weight: 500; color: #fff; }
.tr .dot { width: 16px; height: 16px; border-radius: 50%; background: #d9d9d9; margin-left: 26px; margin-bottom: 2px; }
.sw1 { width: 14px; height: 14px; border: 2px solid #000; background: #fff; margin-left: 18px; }
.z { margin-left: 18px; width: 182px; padding-bottom: 2px; }
.d { padding-bottom: 4px; }
.ln { margin-left: auto; width: 53px; height: 2px; background: #fff; }
.tb { height: 62px; background: #4f5a6b; border-bottom: 2px solid #262c38; flex: none; }
.sbar { padding: 12px 6px; }
.sbar i { width: 351px; height: 10px; border-radius: 5px; background: #8b8f9a; }
.lact { display: flex; align-items: center; height: 34px; margin-top: 7px; padding-left: 36px; }
.a2 { margin-left: 31px; }
.a3 { margin-left: 29px; }
.a4 { margin-left: 32px; }
.minus { width: 16px; height: 4px; background: #7c8390; margin-left: 110px; }
.lact svg.cols { margin-left: 34px; }
.search { margin: 9px 18px 0 22px; height: 40px; border-radius: 9px; background: #fff; display: flex; align-items: center; padding-left: 8px; color: #bcbcbc; font-size: 26px; line-height: 38px; flex: none; }
.search span { margin-left: 7px; }
.phead { border-top: 2px solid #242a35; margin-top: 18px; display: flex; align-items: center; height: 32px; padding: 0 15px 0 20px; line-height: 30px; flex: none; }
.phead .seg { margin-left: auto; margin-right: 19px; }
.phead > svg:last-child { margin-left: 20px; }
.seg { display: flex; border: 2px solid #2a303d; width: 120px; height: 28px; box-sizing: border-box; font-size: 16px; line-height: 23px; background: #2a303d; gap: 2px; }
.seg span { flex: 1; text-align: center; background: #3d4352; color: #7f8591; }
.seg span.on { background: #4f5a6d; color: #fff; flex: 1.09; font-weight: 500; }
.space { margin: 15px 16px 0 20px; height: 43px; background: #434b5b; border-color: #3b4551; color: #7b818e; font-weight: 400; padding: 0 7px 0 12px; flex: none; }
.space span { padding-bottom: 3px; }
.space .dn { background: #767d8b; }
.plist { margin-top: 8px; padding: 0 16px 0 20px; }
.prow { height: 46px; box-sizing: border-box; display: flex; align-items: center; border: 2px solid transparent; }
.prow.hl { border-color: #434a54; }
label { width: 199px; box-sizing: border-box; text-align: right; font-size: 22px; color: #ced1d6; padding-right: 1px; flex: none; white-space: nowrap; padding-bottom: 4px; }
.fld { margin-left: 19px; width: 206px; height: 38px; flex: none; box-sizing: border-box; border: 2px solid #303d40; border-radius: 4px; background: #505a6d; display: flex; align-items: center; padding: 0 8px 0 12px; font-size: 22px; font-weight: 500; color: #fff; }
.fld span { padding-bottom: 3px; }
.inp { padding-left: 6px; }
.inp span { padding: 0; }
.fld.off { background: #434b5b; border-color: #3d4655; color: #767d8a; font-weight: 400; height: 36px; }
.off span { padding-bottom: 2px; }
.swc { width: 14px; height: 14px; border: 2px solid #000; background: #fff; margin: 0 23px 0 4px; }
.lnt { width: 65px; height: 2px; background: #fff; margin-right: 28px; }
.pair { display: flex; margin-left: 19px; width: 206px; align-items: center; justify-content: space-between; }
.slider { margin-left: 7px; width: 115px; height: 34px; box-sizing: border-box; border: 2px solid #2e3b40; border-left: 2px solid #5a94e8; background: #505a6d; position: relative; text-align: right; font-size: 22px; font-weight: 500; line-height: 31px; padding-right: 4px; }
.slider::before { content: ''; position: absolute; left: -2px; top: 6px; height: 18px; width: 2px; background: #2e3b40; }
.tk { position: absolute; left: 52px; bottom: 2px; width: 1px; height: 11px; background: #9aa0aa; }
.mini { margin: 0; width: 78px; padding-left: 14px; }
.ht { margin: 0; width: 162px; }
.pick { width: 40px; height: 36px; box-sizing: border-box; border: 2px solid #303a45; border-radius: 4px; }

/* bottom */
.bottom { grid-column: 2 / 4; display: flex; gap: 2px; padding: 2px 0 0 2px; box-sizing: border-box; background: #232832; }
.bt { width: 116px; height: 42px; background: #3b4353; color: #a9adb4; font-size: 22px; display: flex; align-items: center; justify-content: center; padding: 0 4px 5px 0; box-sizing: border-box; }
.bt.on { width: 118px; background: #4e5a70; color: #fff; font-weight: 700; }
.bt.add { width: 44px; padding: 0; }
.bt.fill { width: 1228px; }
.status { flex: 1; height: 42px; background: #3b4353; display: flex; align-items: flex-end; }
.coord { width: 272px; margin-left: 29px; font-size: 22px; letter-spacing: .3px; line-height: 39px; color: #b9bdc3; white-space: nowrap; padding-bottom: 1px; }
.tg { width: 40px; height: 40px; margin-right: 4px; color: #d9d9d9; flex: none; position: relative; left: -1px; }
.tg.on { background: #668cbb; color: #fff; }
.lone { margin-left: 2px; }
.ratio { font-size: 20px; line-height: 39px; color: #b9bdc3; margin-left: 7px; width: 31px; }
.rdn { margin: 0 18px 15px 2px; }
.shapes { margin-bottom: 3px; }
.bgear { margin: 0 0 4px 11px; }
</style>
